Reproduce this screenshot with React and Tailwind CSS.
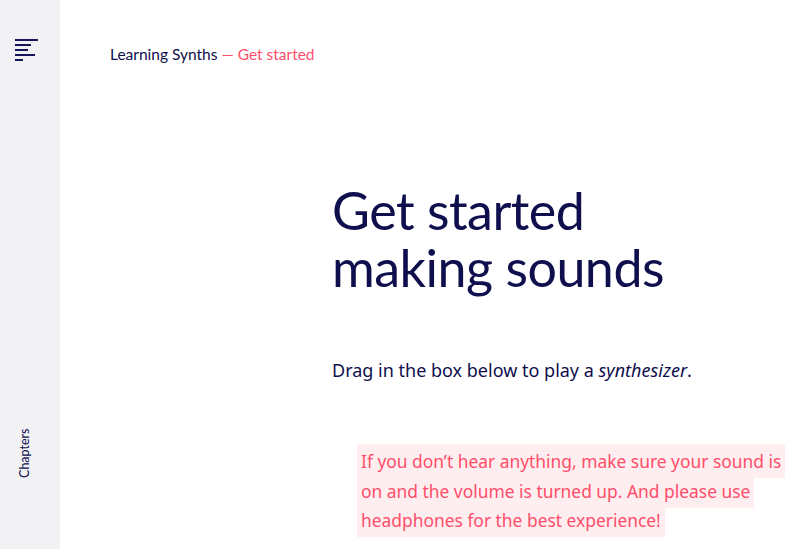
import React from "react";

// sidebar hamburger: five bars of differing length
function MenuIcon() {
  const bars = [23, 16, 13, 20, 8];
  return (
    <div className="flex flex-col gap-[3px]">
      {bars.map((w, i) => (
        <span key={i} className="block h-[2px] bg-[#16165a]" style={{ width: w }} />
      ))}
    </div>
  );
}

export default function App() {
  const font = { fontFamily: "Lato, 'Noto Sans', sans-serif" };
  return (
    <div className="flex h-[549px] w-[800px] overflow-hidden bg-white text-[#0f0f4d]" style={font}>
      {/* sidebar */}
      <aside className="flex w-[60px] shrink-0 flex-col items-center justify-between bg-[#f2f2f5] pt-[39px] pb-[90px]">
        <div className="pr-[8px]">
          <MenuIcon />
        </div>
        <div className="pr-[8px]">
          <div className="-rotate-90 whitespace-nowrap text-[12.5px] leading-none">Chapters</div>
        </div>
      </aside>

      {/* main */}
      <main className="flex-1">
        <nav className="pl-[50px] pt-[43px] text-[15.5px]">
          Learning Synths <span className="text-[#ff4d6a]">— Get started</span>
        </nav>

        <div className="pl-[272px] pt-[116px]">
          <h1 className="text-[52px] leading-[57px] font-normal tracking-[-0.5px]">
            Get started
            <br />
            making sounds
          </h1>

          <p className="mt-[61px] text-[18px]" style={{ fontFamily: "'Noto Sans', sans-serif" }}>
            Drag in the box below to play a <em>synthesizer</em>.
          </p>

          <p
            className="mt-[63px] pl-[25px] pr-[8px] text-[17.4px] leading-[29.5px] text-[#ff4d6a]"
            style={{ fontFamily: "'Noto Sans', sans-serif" }}
          >
            <span className="bg-[#ffeef0] px-[4px] py-[5px] [box-decoration-break:clone]">
              If you don’t hear anything, make sure your sound is on and the volume is turned up. And please use headphones for the best experience!
            </span>
          </p>
        </div>
      </main>
    </div>
  );
}
